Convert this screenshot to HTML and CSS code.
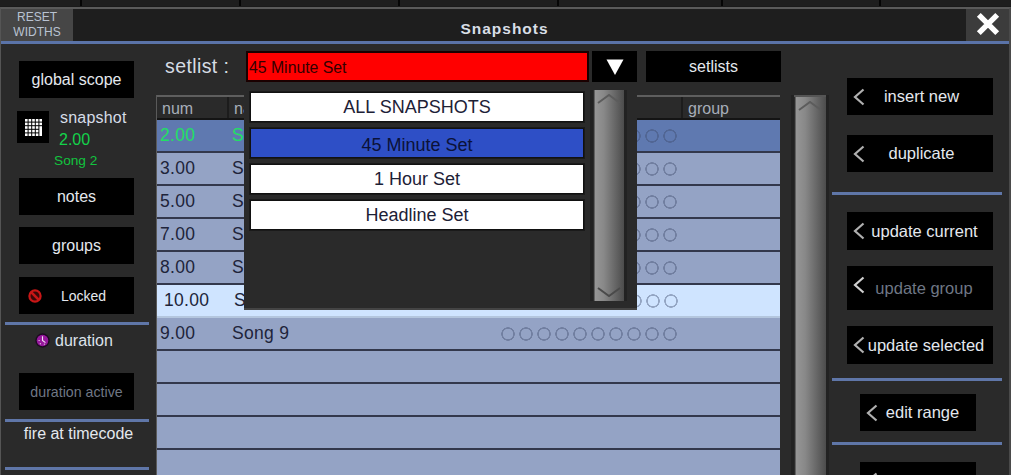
FILE: index.html
```html
<!DOCTYPE html>
<html lang="en">
<head>
<meta charset="utf-8">
<title>Snapshots</title>
<link rel="stylesheet" href="styles.css">
</head>
<body>
<div class="page">
  <div class="strip"><i class="s1"></i><i class="s2"></i><i class="s2"></i><i class="s2"></i><i class="s3"></i><i class="s4"></i><i class="s5"></i></div>
  <div class="window">
    <header class="titlebar">
      <div class="reset">RESET<br>WIDTHS</div>
      <div class="title">Snapshots</div>
      <div class="close"><svg viewBox="0 0 24 24" width="26" height="26"><path d="M3.5 3.5 20.5 20.5M20.5 3.5 3.5 20.5" stroke="#fff" stroke-width="5" fill="none"/></svg></div>
    </header>
    <div class="main">
      <aside class="left">
        <div class="btn lb b-scope">global scope</div>
        <div class="snap">
          <div class="gridbtn">
            <svg viewBox="0 0 17 17" width="17" height="17" fill="#fff"><rect x="0" y="0" width="2.6" height="2.6"/><rect x="3.6" y="0" width="2.6" height="2.6"/><rect x="7.2" y="0" width="2.6" height="2.6"/><rect x="10.8" y="0" width="2.6" height="2.6"/><rect x="14.400" y="0" width="2.6" height="2.6"/><rect x="0" y="3.6" width="2.6" height="2.6"/><rect x="3.6" y="3.6" width="2.6" height="2.6"/><rect x="7.2" y="3.6" width="2.6" height="2.6"/><rect x="10.8" y="3.6" width="2.6" height="2.6"/><rect x="14.400" y="3.6" width="2.6" height="2.6"/><rect x="0" y="7.2" width="2.6" height="2.6"/><rect x="3.6" y="7.2" width="2.6" height="2.6"/><rect x="7.2" y="7.2" width="2.6" height="2.6"/><rect x="10.8" y="7.2" width="2.6" height="2.6"/><rect x="14.400" y="7.2" width="2.6" height="9.8"/><rect x="0" y="10.8" width="2.6" height="2.6"/><rect x="3.6" y="10.8" width="2.6" height="2.6"/><rect x="7.2" y="10.8" width="2.6" height="2.6"/><rect x="10.8" y="10.8" width="2.6" height="2.6"/><rect x="0" y="14.400" width="2.6" height="2.6"/><rect x="3.6" y="14.400" width="2.6" height="2.6"/><rect x="7.2" y="14.400" width="2.6" height="2.6"/><rect x="10.8" y="14.400" width="2.6" height="2.6"/></svg>
          </div>
          <div class="snapinfo">
            <div class="snapname">snapshot</div>
            <div class="snapnum">2.00</div>
            <div class="snapsong">Song 2</div>
          </div>
        </div>
        <div class="btn lb b-notes">notes</div>
        <div class="btn lb b-groups">groups</div>
        <div class="btn lb b-locked">
          <svg class="lockicon" viewBox="0 0 14 14" width="14" height="14"><circle cx="7" cy="7" r="5.6" fill="#3a0808" stroke="#c81616" stroke-width="2.2"/><path d="M3.200 3.200 10.800 10.800" stroke="#c81616" stroke-width="2.6"/></svg>
          <span class="locktext">Locked</span>
        </div>
        <hr class="rule r1">
        <div class="duration">
          <svg viewBox="0 0 15 15" width="15" height="15"><circle cx="7.5" cy="7.5" r="7.2" fill="#1c0a20"/><circle cx="7.5" cy="7.5" r="5.8" fill="#96189c"/><path d="M7.5 3.2V7.5L10.4 9.6M3.6 7.5h1M5 11.2l.6-.8M9.6 11.6l-.5-.9" stroke="#f4e4f4" stroke-width="1.1" fill="none"/></svg>
          <span>duration</span>
        </div>
        <div class="btn lb dim b-active">duration active</div>
        <hr class="rule r2">
        <div class="fire">fire at timecode</div>
        <hr class="rule r3">
      </aside>
      <section class="center">
        <div class="setlistbar">
          <div class="setlabel">setlist :</div>
          <div class="select">45 Minute Set</div>
          <div class="btn arrow"><svg viewBox="0 0 18 18" width="18" height="18"><path d="M0.5 1.5H17.5L9 17Z" fill="#fff"/></svg></div>
          <div class="btn setlists">setlists</div>
        </div>
        <div class="listwrap">
          <div class="table">
            <div class="thead"><div class="th th-num">num</div><div class="th th-name">name</div><div class="th th-group">group</div></div>
            <div class="row sel"><span class="num">2.00</span><span class="name">Song 2</span><span class="dots"></span></div>
            <div class="row"><span class="num">3.00</span><span class="name">Song 3</span><span class="dots"></span></div>
            <div class="row"><span class="num">5.00</span><span class="name">Song 5</span><span class="dots"></span></div>
            <div class="row"><span class="num">7.00</span><span class="name">Song 7</span><span class="dots"></span></div>
            <div class="row"><span class="num">8.00</span><span class="name">Song 8</span><span class="dots"></span></div>
            <div class="row lit"><span class="num">10.00</span><span class="name">Song 10</span><span class="dots"></span></div>
            <div class="row"><span class="num">9.00</span><span class="name">Song 9</span><span class="dots"></span></div>
            <div class="row"></div>
            <div class="row"></div>
            <div class="row"></div>
            <div class="row"></div>
          </div>
          <div class="scroll main-scroll"><svg class="up" viewBox="0 0 24 10" width="24" height="10"><path d="M1 9 12 1 23 9" stroke="#5c5c5c" stroke-width="2" fill="none"/></svg></div>
        </div>
        <div class="popup">
          <div class="options">
            <div class="opt">ALL SNAPSHOTS</div>
            <div class="opt cur">45 Minute Set</div>
            <div class="opt">1 Hour Set</div>
            <div class="opt">Headline Set</div>
          </div>
          <div class="scroll pop-scroll">
            <svg class="up" viewBox="0 0 24 10" width="24" height="10"><path d="M1 9 12 1 23 9" stroke="#5c5c5c" stroke-width="2" fill="none"/></svg>
            <svg class="down" viewBox="0 0 24 10" width="24" height="10"><path d="M1 1 12 9 23 1" stroke="#4a4a4a" stroke-width="2" fill="none"/></svg>
          </div>
        </div>
      </section>
      <aside class="right">
        <div class="btn rb b-insert"><svg class="chev" viewBox="0 0 12 18" width="12" height="18"><path d="M10.500 1.500 2 9l8.500 7.500"/></svg><span>insert new</span></div>
        <div class="btn rb b-dup"><svg class="chev" viewBox="0 0 12 18" width="12" height="18"><path d="M10.500 1.500 2 9l8.500 7.500"/></svg><span>duplicate</span></div>
        <hr class="rule rr1">
        <div class="btn rb b-cur"><svg class="chev" viewBox="0 0 12 18" width="12" height="18"><path d="M10.500 1.500 2 9l8.500 7.500"/></svg><span>update current</span></div>
        <div class="btn rb dim b-grp"><svg class="chev" viewBox="0 0 12 18" width="12" height="18"><path d="M10.500 1.500 2 9l8.500 7.500"/></svg><span>update group</span></div>
        <div class="btn rb b-sel"><svg class="chev" viewBox="0 0 12 18" width="12" height="18"><path d="M10.500 1.500 2 9l8.500 7.500"/></svg><span>update selected</span></div>
        <hr class="rule rr2">
        <div class="btn rb small b-range"><svg class="chev" viewBox="0 0 12 18" width="12" height="18"><path d="M10.500 1.500 2 9l8.500 7.500"/></svg><span>edit range</span></div>
        <hr class="rule rr3">
        <div class="btn rb small b-last"><svg class="chev" viewBox="0 0 12 18" width="12" height="18"><path d="M10.500 1.500 2 9l8.500 7.500"/></svg></div>
      </aside>
    </div>
  </div>
</div>
</body>
</html>
```
FILE: styles.css
```css
* { box-sizing: border-box; }
html, body { margin: 0; padding: 0; background: #111; }
body { font-family: "Liberation Sans", Arial, sans-serif; color: #e6e6e6; }
.page { width: 1011px; height: 475px; overflow: hidden; }

.strip { height: 7px; display: flex; background: #1a1a1a; }
.strip i { display: block; height: 6px; border-right: 2px solid #050505; background: #1e1e1e; }
.strip .s1 { width: 82px; }
.strip .s2 { width: 159px; }
.strip .s3 { width: 164px; }
.strip .s4 { width: 158px; }
.strip .s5 { flex: 1; border-right: 0; }

.window { height: 468px; background: #2a2a2a; border-top: 2px solid #5a5a5a; border-left: 1px solid #555; border-right: 2px solid #4a4a4a; }

.titlebar { height: 35px; background: #1e1e1e; border-bottom: 3px solid #5a73a8; display: flex; align-items: stretch; }
.reset { width: 72px; background: #464646; color: #b9c3d2; font-size: 12px; line-height: 15px; text-align: center; padding-top: 1px; }
.title { flex: 1; text-align: center; font-size: 15.500px; font-weight: bold; letter-spacing: 1px; color: #d8dee6; line-height: 39px; padding-right: 30px; }
.close { width: 43px; background: #3c3c3c; display: flex; align-items: center; justify-content: center; padding-bottom: 2px; }

.main { display: flex; height: 431px; }
.btn { background: #000; color: #e4e8ee; font-size: 16px; display: flex; align-items: center; justify-content: center; }
.dim { color: #6f7785; }

.left { width: 155px; flex: none; }
.lb { width: 115px; height: 37px; margin-left: 18px; }
.b-scope { margin-top: 17px; }
.snap { display: flex; margin: 13px 0 0 16px; height: 67px; }
.gridbtn { width: 32px; height: 32px; background: #000; display: flex; align-items: center; justify-content: center; }
.snapinfo { margin-left: 8px; }
.snapname { font-size: 16px; color: #d6dde8; line-height: 16px; margin: -1px 0 0 3px; letter-spacing: .2px; }
.snapnum { font-size: 16px; color: #14d24a; line-height: 18px; margin: 5px 0 0 2px; }
.snapsong { font-size: 13.700px; color: #12c43f; line-height: 14px; margin: 5px 0 0 -3px; }
.b-groups { margin-top: 12px; }
.b-locked { margin-top: 13px; justify-content: flex-start; font-size: 14px; }
.lockicon { margin-left: 9px; }
.locktext { margin-left: 19px; }

.rule { display: block; border: 0; height: 3px; background: #5f76a8; margin: 0; }
.r1 { margin: 8px 7px 0 4px; }
.duration { display: flex; align-items: center; margin: 7px 0 0 34px; height: 17px; font-size: 16px; color: #dde2ea; gap: 5px; }
.b-active { margin-top: 24px; font-size: 14.200px; }
.r2 { margin: 9px 7px 0 4px; }
.fire { text-align: center; font-size: 16px; color: #e4e8ee; line-height: 16px; margin-top: 4px; }
.r3 { margin: 25px 7px 0 4px; }

.center { width: 675px; flex: none; position: relative; padding-top: 7px; }
.setlistbar { display: flex; height: 31px; align-items: stretch; }
.setlabel { width: 90px; padding-left: 9px; font-size: 19.500px; color: #d6dce4; line-height: 31px; letter-spacing: .4px; }
.select { width: 343px; background: #f00; border: 2px solid #1a0000; color: #300; font-size: 15.800px; line-height: 29px; padding-left: 1px; margin-right: 3px; }
.arrow { width: 45px; margin-right: 9px; }
.setlists { width: 135px; }

.listwrap { display: flex; margin-top: 13px; }
.table { width: 624px; border-left: 1px solid #5a5a5a; }
.thead { height: 25px; display: flex; border-top: 2px solid #5e5e5e; border-bottom: 2px solid #141414; background: #2a2a2a; color: #a7aeb9; font-size: 16px; line-height: 23px; }
.th { padding-left: 5px; border-right: 2px solid #1c1c1c; }
.th-num { width: 72px; }
.th-name { width: 454px; }
.th-group { flex: 1; border-right: 0; }
.row { height: 33px; background: #94a3c5; border-bottom: 2px solid #33384c; display: flex; align-items: center; color: #20243a; font-size: 17.500px; letter-spacing: .3px; }
.num { width: 72px; padding-left: 3px; }
.name { width: 270px; padding-left: 3px; }
.dots { width: 180px; height: 18px; background: radial-gradient(circle at 9px 9px, transparent 5px, rgba(60,72,105,.4) 5.5px, rgba(60,72,105,.4) 6.5px, transparent 7px) 0 0 / 18px 18px; }
.sel { background: #5f79b0; }
.sel .num, .sel .name { color: #1fe064; }
.lit { background: #cfe4ff; border-bottom-color: #b4c6de; }
.lit .num { padding-left: 7px; }
.lit .name { padding-left: 5px; }
.lit .dots { margin-left: 1px; }

.scroll { background: linear-gradient(90deg, #2c2c2c 0 1px, #969696 2px, #888 35%, #4c4c4c 100%); position: relative; box-shadow: -3px 0 0 #222, 3px 0 0 #222; }
.main-scroll { width: 32px; margin-left: 14px; height: 384px; border-top: 2px solid #555; }
.up { position: absolute; top: 4px; left: 4px; }
.down { position: absolute; bottom: 4px; left: 4px; }

.popup { position: absolute; left: 88px; top: 41px; width: 393px; height: 225px; background: #2a2a2a; border-bottom: 2px solid #444; display: flex; padding: 7px 0 0 6px; }
.options { width: 334px; display: flex; flex-direction: column; gap: 6px; }
.opt { height: 30px; background: #fff; border: 1px solid #111; color: #1d2136; font-size: 18px; display: flex; align-items: center; justify-content: center; box-shadow: 0 0 0 1px #1a1a1a; }
.cur { background: #2e4fc6; color: #0b1238; padding-top: 4px; }
.pop-scroll { width: 31px; height: 211px; margin: -2px 0 0 9px; }

.right { flex: 1; padding-top: 34px; }
.rb { width: 146px; height: 37px; margin-left: 16px; justify-content: flex-start; font-size: 16.500px; }
.chev { flex: none; margin-left: 6px; }
.chev path { fill: none; stroke: #b0b0b0; stroke-width: 2.2; }
.rb span { flex: 1; text-align: center; padding-right: 15px; }
.b-dup { margin-top: 20px; }
.rr1 { margin: 20px 7px 0 1px; }
.b-cur { margin-top: 17px; height: 38px; }
.b-cur span { padding-right: 9px; }
.b-grp { margin-top: 16px; height: 44px; }
.b-grp span { padding-right: 10px; }
.b-grp .chev { margin-top: -6px; }
.b-grp .chev path { stroke: #d0d0d0; }
.b-sel { margin-top: 16px; height: 38px; }
.b-sel span { padding-right: 6px; }
.rr2 { margin: 14px 7px 0 1px; }
.small { width: 116px; margin-left: 29px; }
.small.rb span { padding-right: 9px; }
.b-range { margin-top: 13px; }
.rr3 { margin: 11px 7px 0 1px; }
.b-last { margin-top: 17px; }
```
